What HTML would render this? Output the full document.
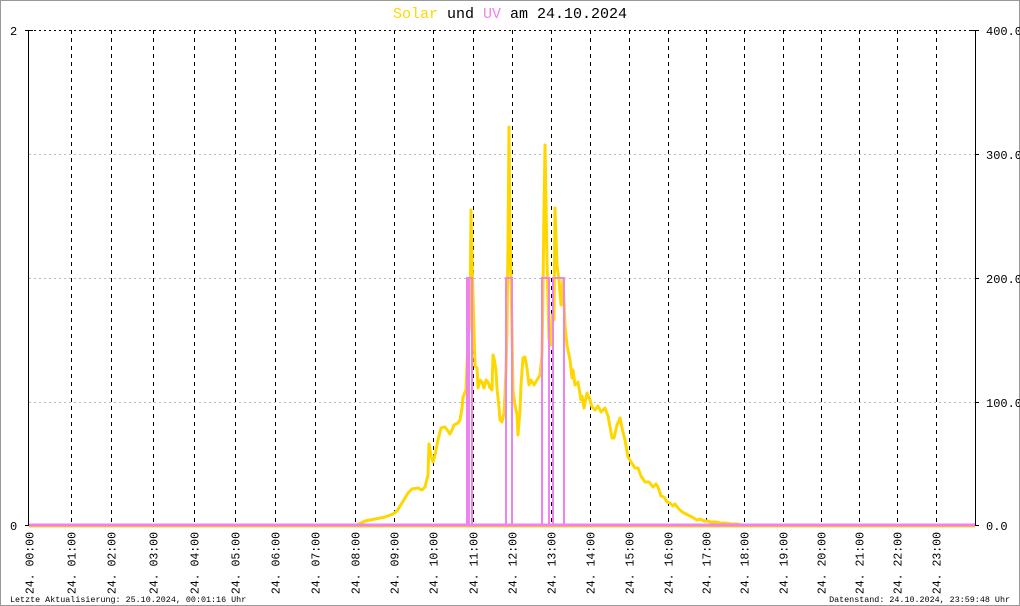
<!DOCTYPE html>
<html><head><meta charset="utf-8"><style>
html,body{margin:0;padding:0;background:#fff}
svg{display:block}
text{font-family:"Liberation Mono","DejaVu Sans Mono",monospace}
</style></head><body>
<svg width="1020" height="606" viewBox="0 0 1020 606" xmlns="http://www.w3.org/2000/svg">
<rect x="0.5" y="0.5" width="1019" height="605" fill="#fff" stroke="#999"/>
<text x="510" y="18" font-size="15" text-anchor="middle" fill="#000"><tspan fill="#ffd700">Solar</tspan> und <tspan fill="#ee82ee">UV</tspan> am 24.10.2024</text>
<g stroke="#bbb" stroke-dasharray="2,3" stroke-width="1">
<line x1="29" y1="154.5" x2="975" y2="154.5"/>
<line x1="29" y1="278.5" x2="975" y2="278.5"/>
<line x1="29" y1="402.5" x2="975" y2="402.5"/>
</g>
<line x1="29" y1="30.5" x2="975" y2="30.5" stroke="#000" stroke-dasharray="2,3"/>
<g stroke="#000" stroke-dasharray="4,4" stroke-width="1">
<line x1="71.5" y1="30" x2="71.5" y2="525"/><line x1="111.5" y1="30" x2="111.5" y2="525"/>
<line x1="153.5" y1="30" x2="153.5" y2="525"/><line x1="194.5" y1="30" x2="194.5" y2="525"/>
<line x1="235.5" y1="30" x2="235.5" y2="525"/><line x1="275.5" y1="30" x2="275.5" y2="525"/>
<line x1="315.5" y1="30" x2="315.5" y2="525"/><line x1="355.5" y1="30" x2="355.5" y2="525"/>
<line x1="394.5" y1="30" x2="394.5" y2="525"/><line x1="433.5" y1="30" x2="433.5" y2="525"/>
<line x1="473.5" y1="30" x2="473.5" y2="525"/><line x1="512.5" y1="30" x2="512.5" y2="525"/>
<line x1="551.5" y1="30" x2="551.5" y2="525"/><line x1="590.5" y1="30" x2="590.5" y2="525"/>
<line x1="629.5" y1="30" x2="629.5" y2="525"/><line x1="668.5" y1="30" x2="668.5" y2="525"/>
<line x1="706.5" y1="30" x2="706.5" y2="525"/><line x1="744.5" y1="30" x2="744.5" y2="525"/>
<line x1="783.5" y1="30" x2="783.5" y2="525"/><line x1="821.5" y1="30" x2="821.5" y2="525"/>
<line x1="859.5" y1="30" x2="859.5" y2="525"/><line x1="897.5" y1="30" x2="897.5" y2="525"/>
<line x1="936.5" y1="30" x2="936.5" y2="525"/>
</g>
<line x1="28.5" y1="30" x2="28.5" y2="526" stroke="#000"/>
<line x1="25" y1="30.5" x2="33" y2="30.5" stroke="#000"/>
<line x1="25" y1="525.5" x2="29" y2="525.5" stroke="#000"/>
<line x1="975.5" y1="30" x2="975.5" y2="526" stroke="#000"/>
<g stroke="#000"><line x1="971" y1="30.5" x2="979" y2="30.5"/><line x1="975" y1="154.5" x2="979" y2="154.5"/><line x1="975" y1="278.5" x2="979" y2="278.5"/><line x1="975" y1="402.5" x2="979" y2="402.5"/><line x1="975" y1="525.5" x2="979" y2="525.5"/></g>
<g font-size="12" fill="#000">
<text x="10" y="35">2</text><text x="10" y="530">0</text>
<text x="986" y="35">400.0</text><text x="986" y="159">300.0</text><text x="986" y="283">200.0</text><text x="986" y="407">100.0</text><text x="986" y="530">0.0</text>
</g>
<line x1="29" y1="527" x2="975" y2="527" stroke="#ffd700" stroke-width="1"/>
<polyline fill="none" stroke="#ffd700" stroke-width="3" stroke-linejoin="round" points="29,525 357,525 365,521 375,519 385,517 393,514 397,511 402,503 408,493 412,489 418,488 422,490 425,487 428,475 429,444 431,456 433,462 435,455 438,440 441,428 445,427 448,431 450,434 452,430 454,425 458,423 460,420 462,408 463,397 466,390 467,365 468,343 470,320 471,210 472,260 474,330 475,366 477,368 478,388 480,380 482,382 484,388 486,380 488,382 490,388 492,390 493,355 494,358 496,370 497,388 499,407 500,420 502,422 504,413 505,394 506,370 507,330 508,245 509,127 510,230 511,280 512,330 513,390 515,405 517,415 518,435 520,410 521,385 523,358 525,357 527,368 529,385 531,380 534,385 537,380 540,375 542,355 543,290 544,210 545,145 547,260 548,300 549,340 551,345 552,315 554,320 555,208 557,265 559,280 561,305 563,280 565,325 567,345 570,360 572,378 573,370 575,385 578,382 581,400 582,396 584,408 587,393 590,400 592,407 595,410 598,406 601,412 605,408 608,416 612,438 614,438 617,425 620,418 622,428 625,440 628,457 631,462 635,468 638,468 641,476 645,482 649,482 653,487 656,484 658,487 661,496 664,497 667,502 670,503 673,506 675,504 678,508 681,511 684,513 688,515 692,517 697,520 700,519 704,521 707,521 711,522 716,522 720,523 725,523 731,524 738,524 741,525"/>
<polyline fill="none" stroke="#ee82ee" stroke-width="2" points="29,525 467,525 467,278 472,278 472,525 506,525 506,278 512,278 512,525 542,525 542,278 549,278 549,525 553,525 553,278 564,278 564,525 975,525"/>
<rect x="467" y="278" width="3" height="247" fill="#ee82ee"/>
<line x1="29" y1="525" x2="975" y2="525" stroke="#ee82ee" stroke-width="3"/>
<g font-size="11.5" fill="#000" text-anchor="end">
<text transform="translate(33.5,532) rotate(-90)">24. 00:00</text>
<text transform="translate(75.5,532) rotate(-90)">24. 01:00</text>
<text transform="translate(115.5,532) rotate(-90)">24. 02:00</text>
<text transform="translate(157.5,532) rotate(-90)">24. 03:00</text>
<text transform="translate(198.5,532) rotate(-90)">24. 04:00</text>
<text transform="translate(239.5,532) rotate(-90)">24. 05:00</text>
<text transform="translate(279.5,532) rotate(-90)">24. 06:00</text>
<text transform="translate(319.5,532) rotate(-90)">24. 07:00</text>
<text transform="translate(359.5,532) rotate(-90)">24. 08:00</text>
<text transform="translate(398.5,532) rotate(-90)">24. 09:00</text>
<text transform="translate(437.5,532) rotate(-90)">24. 10:00</text>
<text transform="translate(477.5,532) rotate(-90)">24. 11:00</text>
<text transform="translate(516.5,532) rotate(-90)">24. 12:00</text>
<text transform="translate(555.5,532) rotate(-90)">24. 13:00</text>
<text transform="translate(594.5,532) rotate(-90)">24. 14:00</text>
<text transform="translate(633.5,532) rotate(-90)">24. 15:00</text>
<text transform="translate(672.5,532) rotate(-90)">24. 16:00</text>
<text transform="translate(710.5,532) rotate(-90)">24. 17:00</text>
<text transform="translate(748.5,532) rotate(-90)">24. 18:00</text>
<text transform="translate(787.5,532) rotate(-90)">24. 19:00</text>
<text transform="translate(825.5,532) rotate(-90)">24. 20:00</text>
<text transform="translate(863.5,532) rotate(-90)">24. 21:00</text>
<text transform="translate(901.5,532) rotate(-90)">24. 22:00</text>
<text transform="translate(940.5,532) rotate(-90)">24. 23:00</text>
</g>
<g font-size="8.4" fill="#000">
<text x="10" y="602">Letzte Aktualisierung: 25.10.2024, 00:01:16 Uhr</text>
<text x="1010" y="602" text-anchor="end">Datenstand: 24.10.2024, 23:59:48 Uhr</text>
</g>
</svg>
</body></html>
